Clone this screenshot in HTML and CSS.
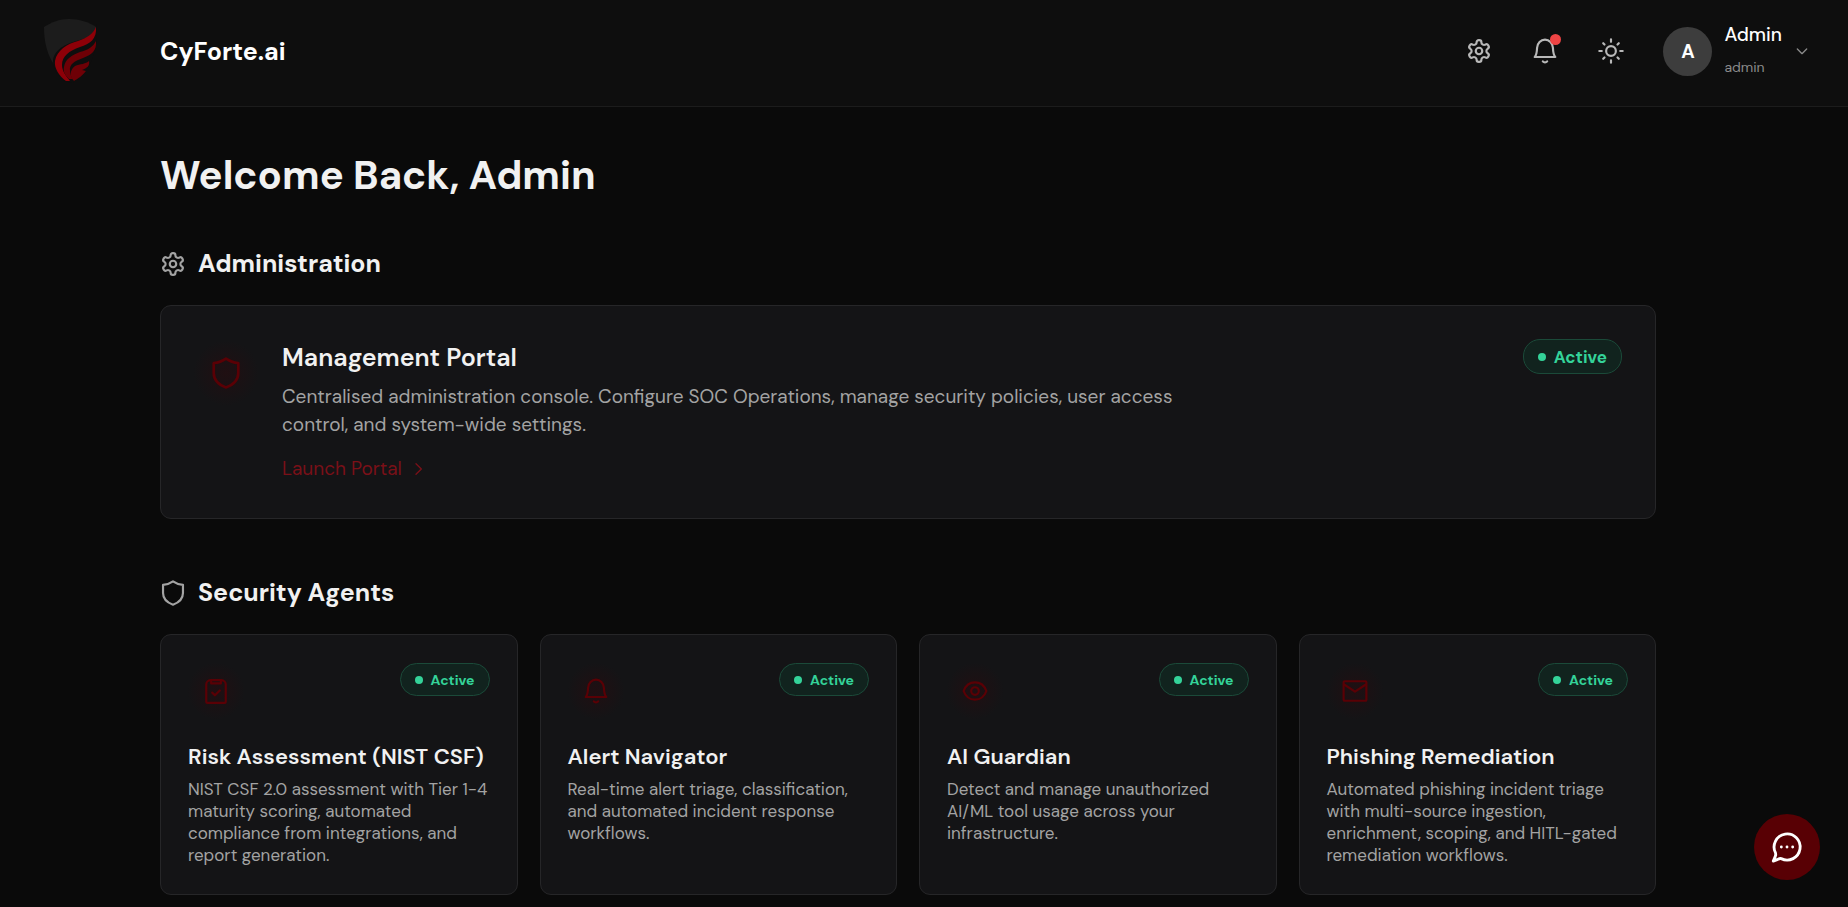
FILE: index.html
```html
<!DOCTYPE html>
<html lang="en">
<head>
    <meta charset="UTF-8">
    <meta name="viewport" content="width=device-width, initial-scale=1.0">
    <title>CyForte.ai</title>
    <link rel="stylesheet" href="styles.css">
</head>
<body>
    <!-- Shared icon shapes -->
    <svg class="sprite" aria-hidden="true">
        <symbol id="icon-gear" viewBox="0 0 24 24">
            <path d="M12.22 2h-.44a2 2 0 0 0-2 2v.18a2 2 0 0 1-1 1.73l-.43.25a2 2 0 0 1-2 0l-.15-.08a2 2 0 0 0-2.73.73l-.22.38a2 2 0 0 0 .73 2.73l.15.1a2 2 0 0 1 1 1.72v.51a2 2 0 0 1-1 1.74l-.15.09a2 2 0 0 0-.73 2.73l.22.38a2 2 0 0 0 2.73.73l.15-.08a2 2 0 0 1 2 0l.43.25a2 2 0 0 1 1 1.73V20a2 2 0 0 0 2 2h.44a2 2 0 0 0 2-2v-.18a2 2 0 0 1 1-1.73l.43-.25a2 2 0 0 1 2 0l.15.08a2 2 0 0 0 2.73-.73l.22-.39a2 2 0 0 0-.73-2.73l-.15-.08a2 2 0 0 1-1-1.74v-.5a2 2 0 0 1 1-1.74l.15-.09a2 2 0 0 0 .73-2.73l-.22-.38a2 2 0 0 0-2.73-.73l-.15.08a2 2 0 0 1-2 0l-.43-.25a2 2 0 0 1-1-1.73V4a2 2 0 0 0-2-2z"/>
            <circle cx="12" cy="12" r="3"/>
        </symbol>
        <symbol id="icon-bell" viewBox="0 0 24 24">
            <path d="M2.500 17.500h19c-1.700-1.500-2-4-2.200-8.500C19 5 16 1.500 12 1.500S5 5 4.700 9c-.2 4.500-.5 7-2.200 8.500z"/>
            <path d="M10 21.500c1 1.300 3 1.300 4 0"/>
        </symbol>
        <symbol id="icon-sun" viewBox="0 0 24 24">
            <circle cx="12" cy="12" r="4.500"/>
            <path d="M12 1.200v2.300M12 20.500v2.300M4.800 4.800l1.200 1.200M18 18l1.200 1.200M1.200 12h2.300M20.500 12h2.300M4.800 19.200l1.200-1.200M18 6l1.200-1.200"/>
        </symbol>
        <symbol id="icon-shield" viewBox="0 0 24 24">
            <path d="M12 1.200c2.800 2 5.600 3 9.200 3.300V12c0 5-3.700 8.800-9.200 10.800C6.500 20.800 2.800 17 2.800 12V4.500C6.400 4.200 9.200 3.200 12 1.200z"/>
        </symbol>
        <symbol id="icon-clipboard" viewBox="0 0 24 24">
            <path d="M7 2h10a4 4 0 0 1 4 4v16a1 1 0 0 1-1 1H4a1 1 0 0 1-1-1V6a4 4 0 0 1 4-4z"/>
            <path d="M7.500 2v3h9V2M8.500 13.500l2.500 2.500 4.500-4.500"/>
        </symbol>
        <symbol id="icon-eye" viewBox="0 0 24 24">
            <path d="M1.500 12C3.500 6.500 7.300 4 12 4s8.500 2.500 10.500 8c-2 5.500-5.800 8-10.500 8S3.500 17.500 1.500 12z"/>
            <circle cx="12" cy="12" r="3.500"/>
        </symbol>
        <symbol id="icon-mail" viewBox="0 0 24 24">
            <rect x="1.500" y="3" width="21" height="18" rx="1"/>
            <path d="M2 6l10 6.500L22 6"/>
        </symbol>
        <symbol id="icon-chevron" viewBox="0 0 24 24">
            <path d="M9 4l8 8-8 8"/>
        </symbol>
        <symbol id="icon-chevron-down" viewBox="0 0 24 24">
            <path d="M5 9l7 7 7-7"/>
        </symbol>
        <symbol id="icon-chat" viewBox="0 0 24 24">
            <path d="M7.900 20.200A9.200 9.200 0 1 0 3.900 16.200c.4 1 .1 1.700-.3 2.800L2.300 22l3.200-1.300c1-.5 1.500-.8 2.400-.5z"/>
            <path d="M8 12h.01M12 12h.01M16 12h.01"/>
        </symbol>
    </svg>

    <header class="topbar">
        <a class="logo" href="#" aria-label="CyForte home">
            <svg viewBox="0 0 54 64">
                <path class="logo-shield" d="M0 8C8 3 15 0 25 0s20 3 27 8v3c0 24-6 39-24 51C10 52 0 34 0 8z"/>
                <path class="logo-gap" d="M52 5c1 10-5 13-16 16C24 24 11 29 9 41c0 9 4 15 11 21l8 2C46 52 53 36 53 11z"/>
                <path class="logo-wing" d="M52 8c1 12-6 17-16 20-11 4-18 9-18 18 0 6 4 11 8 16h-4C15 57 10 49 11 42c2-11 12-17 23-20 9-3 15-7 18-14z"/>
                <path class="logo-feather" d="M52 22c1 10-5 14-13 17-8 3-14 6-13 13 0 3 1 5 3 8h-4c-4-4-6-7-5-12 1-8 8-12 16-15 8-2 13-5 16-11z"/>
                <path class="logo-feather" d="M45 42c1 5-2 7-7 9l4 1c-3 4-7 7-12 10-5-5-4-11 1-15 5-2 11-2 14-5z"/>
            </svg>
        </a>
        <a class="brand" href="#">CyForte.ai</a>
        <div class="actions">
            <button class="icon-btn" aria-label="Settings"><svg class="icon"><use href="#icon-gear"/></svg></button>
            <button class="icon-btn" aria-label="Notifications"><svg class="icon"><use href="#icon-bell"/></svg><span class="dot"></span></button>
            <button class="icon-btn" aria-label="Theme"><svg class="icon"><use href="#icon-sun"/></svg></button>
        </div>
        <button class="user">
            <span class="avatar">A</span>
            <span class="user-info">
                <span class="user-name">Admin</span>
                <span class="user-role">admin</span>
            </span>
            <svg class="icon icon-small"><use href="#icon-chevron-down"/></svg>
        </button>
    </header>

    <main class="content">
        <h1>Welcome Back, Admin</h1>

        <section class="section">
            <h2><svg class="icon"><use href="#icon-gear"/></svg>Administration</h2>
            <article class="card portal">
                <span class="tile tile-large"><svg class="icon"><use href="#icon-shield"/></svg></span>
                <div class="portal-body">
                    <h3>Management Portal</h3>
                    <p>Centralised administration console. Configure SOC Operations, manage security policies, user access control, and system-wide settings.</p>
                    <a class="launch" href="#">Launch Portal<svg class="icon icon-small"><use href="#icon-chevron"/></svg></a>
                </div>
                <span class="badge badge-large">Active</span>
            </article>
        </section>

        <section class="section">
            <h2><svg class="icon"><use href="#icon-shield"/></svg>Security Agents</h2>
            <div class="agents">
                <article class="card agent">
                    <div class="agent-top">
                        <span class="tile"><svg class="icon"><use href="#icon-clipboard"/></svg></span>
                        <span class="badge">Active</span>
                    </div>
                    <h3>Risk Assessment (NIST CSF)</h3>
                    <p>NIST CSF 2.0 assessment with Tier 1-4 maturity scoring, automated compliance from integrations, and report generation.</p>
                </article>
                <article class="card agent">
                    <div class="agent-top">
                        <span class="tile"><svg class="icon"><use href="#icon-bell"/></svg></span>
                        <span class="badge">Active</span>
                    </div>
                    <h3>Alert Navigator</h3>
                    <p>Real-time alert triage, classification, and automated incident response workflows.</p>
                </article>
                <article class="card agent">
                    <div class="agent-top">
                        <span class="tile"><svg class="icon"><use href="#icon-eye"/></svg></span>
                        <span class="badge">Active</span>
                    </div>
                    <h3>AI Guardian</h3>
                    <p>Detect and manage unauthorized AI/ML tool usage across your infrastructure.</p>
                </article>
                <article class="card agent">
                    <div class="agent-top">
                        <span class="tile"><svg class="icon"><use href="#icon-mail"/></svg></span>
                        <span class="badge">Active</span>
                    </div>
                    <h3>Phishing Remediation</h3>
                    <p>Automated phishing incident triage with multi-source ingestion, enrichment, scoping, and HITL-gated remediation workflows.</p>
                </article>
            </div>
        </section>
    </main>

    <button class="chat" aria-label="Open chat"><svg class="icon"><use href="#icon-chat"/></svg></button>
</body>
</html>
```

FILE: styles.css
```css
* {
    box-sizing: border-box;
}

body {
    margin: 0;
    background-color: #0a0a0a;
    color: #f1f1f1;
    font-family: "DM Sans", Inter, sans-serif;
    font-size: 16px;
}

h1, h2, h3, p {
    margin: 0;
}

a {
    color: inherit;
    text-decoration: none;
}

button {
    background: none;
    border: none;
    padding: 0;
    color: inherit;
    font-family: inherit;
    cursor: pointer;
}

.sprite {
    display: none;
}

.icon {
    width: 26px;
    height: 26px;
    flex-shrink: 0;
    fill: none;
    stroke: currentColor;
    stroke-width: 2;
    stroke-linecap: round;
    stroke-linejoin: round;
}

.icon-small {
    width: 16px;
    height: 16px;
}

/* Header */
.topbar {
    display: flex;
    align-items: center;
    height: 107px;
    padding: 0 38px 4px 44px;
    background-color: #0e0e0e;
    border-bottom: 1px solid #1c1c1c;
}

.logo {
    width: 116px;
}

.logo svg {
    display: block;
    width: 54px;
    height: 64px;
}

.logo-shield {
    fill: #1c1c1c;
}

.logo-gap {
    fill: #0e0e0e;
}

.logo-wing {
    fill: #8e0008;
}

.logo-feather {
    fill: #6e0006;
}

.brand {
    color: #fff;
    font-size: 25px;
    font-weight: 700;
}

.actions {
    display: flex;
    gap: 22px;
    margin-left: auto;
    margin-right: 30px;
}

.icon-btn {
    position: relative;
    display: flex;
    align-items: center;
    justify-content: center;
    width: 44px;
    height: 44px;
    color: #b8b8b8;
}

.dot {
    position: absolute;
    top: 5px;
    right: 6px;
    width: 11px;
    height: 11px;
    border-radius: 50%;
    background-color: #ef4444;
}

.user {
    display: flex;
    align-items: center;
    gap: 12px;
    color: #8a8a8a;
}

.avatar {
    display: flex;
    align-items: center;
    justify-content: center;
    width: 49px;
    height: 49px;
    border-radius: 50%;
    background-color: #3d3d3d;
    color: #fff;
    font-size: 19px;
    font-weight: 700;
}

.user-info {
    display: flex;
    flex-direction: column;
    text-align: left;
}

.user-name {
    color: #fff;
    font-size: 19px;
    font-weight: 500;
    line-height: 32px;
}

.user-role {
    font-size: 14px;
    line-height: 32px;
}

/* Page content */
.content {
    padding: 40px 192px 12px 160px;
}

h1 {
    font-size: 40px;
    font-weight: 700;
    line-height: 56px;
}

.section {
    margin-top: 41px;
}

.section + .section {
    margin-top: 54px;
}

h2 {
    display: flex;
    align-items: center;
    gap: 12px;
    margin-bottom: 21px;
    font-size: 25px;
    font-weight: 700;
    line-height: 40px;
}

h2 .icon {
    color: #a3a3a3;
}

.card {
    background-color: #141416;
    border: 1px solid #262628;
    border-radius: 11px;
}

.tile {
    display: flex;
    align-items: center;
    justify-content: center;
    width: 56px;
    height: 56px;
    flex-shrink: 0;
    border-radius: 11px;
    background: radial-gradient(#200f12, #141416 72%);
    color: #5a0005;
}

.tile-large {
    width: 64px;
    height: 64px;
}

.tile-large .icon {
    width: 32px;
    height: 32px;
}

.badge {
    display: flex;
    align-items: center;
    gap: 8px;
    height: 33px;
    padding: 0 14px;
    border: 1px solid #1b4a39;
    border-radius: 17px;
    background-color: #11231e;
    color: #34d399;
    font-size: 14px;
    font-weight: 700;
}

.badge::before {
    content: "";
    width: 8px;
    height: 8px;
    border-radius: 50%;
    background-color: #34d399;
}

.badge-large {
    height: 35px;
    font-size: 17px;
}

.portal {
    display: flex;
    align-items: flex-start;
    padding: 33px;
}

.portal .tile {
    margin-top: 2px;
}

.portal-body {
    margin-left: 24px;
    margin-right: auto;
    max-width: 940px;
}

.portal h3 {
    font-size: 25px;
    font-weight: 600;
    line-height: 38px;
}

.portal p {
    margin-top: 6px;
    color: #a3a3a3;
    font-size: 19px;
    line-height: 28px;
}

.launch {
    display: flex;
    align-items: center;
    gap: 8px;
    margin-top: 14px;
    color: #7a1018;
    font-size: 19px;
    line-height: 32px;
}

.agents {
    display: grid;
    grid-template-columns: repeat(4, 1fr);
    gap: 22px;
}

.agent {
    padding: 28px 27px;
}

.agent-top {
    display: flex;
    align-items: flex-start;
    justify-content: space-between;
    margin-bottom: 23px;
}

.agent h3 {
    font-size: 22px;
    font-weight: 600;
    line-height: 30px;
}

.agent p {
    margin-top: 6px;
    color: #a3a3a3;
    font-size: 17px;
    line-height: 22px;
}

/* Floating chat button */
.chat {
    position: fixed;
    right: 28px;
    bottom: 27px;
    display: flex;
    align-items: center;
    justify-content: center;
    width: 66px;
    height: 66px;
    border-radius: 50%;
    background-color: #580004;
    color: #fff;
}

.chat .icon {
    width: 34px;
    height: 34px;
}
```
